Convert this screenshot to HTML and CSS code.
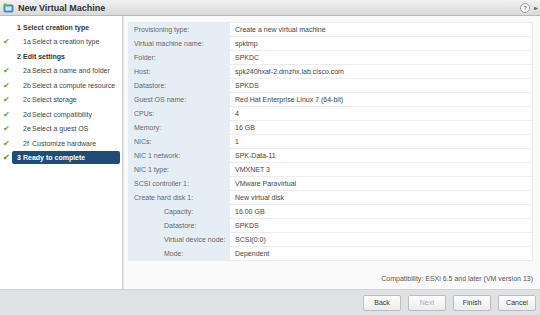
FILE: index.html
```html
<!DOCTYPE html>
<html>
<head>
    <link rel="stylesheet" href="styles.css">
</head>
<body>
    <div class="dialog">
        <div class="titlebar">
            <svg class="vm-icon" width="11" height="10" viewBox="0 0 11 10">
                <rect x="1" y="2" width="9" height="7" rx="1" fill="#5b9bd5" stroke="#2f6ea8" stroke-width="0.8"/>
                <rect x="2.5" y="3.5" width="6" height="4" fill="#cfe4f7"/>
                <path d="M0.5 0.5h3v3h-3z" fill="#6cc04a"/>
            </svg>
            <span class="title">New Virtual Machine</span>
            <span class="tools">
                <span class="help">?</span>
                <span class="more">&#9656;&#9656;</span>
            </span>
        </div>
        <div class="main">
            <div class="nav">
                <div class="step head"><span class="check"></span><span class="num">1</span>Select creation type</div>
                <div class="step sub done"><span class="check">&#10004;</span><span class="num">1a</span>Select a creation type</div>
                <div class="step head"><span class="check"></span><span class="num">2</span>Edit settings</div>
                <div class="step sub done"><span class="check">&#10004;</span><span class="num">2a</span>Select a name and folder</div>
                <div class="step sub done"><span class="check">&#10004;</span><span class="num">2b</span>Select a compute resource</div>
                <div class="step sub done"><span class="check">&#10004;</span><span class="num">2c</span>Select storage</div>
                <div class="step sub done"><span class="check">&#10004;</span><span class="num">2d</span>Select compatibility</div>
                <div class="step sub done"><span class="check">&#10004;</span><span class="num">2e</span>Select a guest OS</div>
                <div class="step sub done"><span class="check">&#10004;</span><span class="num">2f</span>Customize hardware</div>
                <div class="step head done active"><span class="check">&#10004;</span><span class="pill"><span class="num">3</span>Ready to complete</span></div>
            </div>
            <div class="content">
                <table class="summary">
                    <tr><td class="key">Provisioning type:</td><td>Create a new virtual machine</td></tr>
                    <tr><td class="key">Virtual machine name:</td><td>spktmp</td></tr>
                    <tr><td class="key">Folder:</td><td>SPKDC</td></tr>
                    <tr><td class="key">Host:</td><td>spk240hxaf-2.dmzhx.lab.cisco.com</td></tr>
                    <tr><td class="key">Datastore:</td><td>SPKDS</td></tr>
                    <tr><td class="key">Guest OS name:</td><td>Red Hat Enterprise Linux 7 (64-bit)</td></tr>
                    <tr><td class="key">CPUs:</td><td>4</td></tr>
                    <tr><td class="key">Memory:</td><td>16 GB</td></tr>
                    <tr><td class="key">NICs:</td><td>1</td></tr>
                    <tr><td class="key">NIC 1 network:</td><td>SPK-Data-11</td></tr>
                    <tr><td class="key">NIC 1 type:</td><td>VMXNET 3</td></tr>
                    <tr><td class="key">SCSI controller 1:</td><td>VMware Paravirtual</td></tr>
                    <tr><td class="key">Create hard disk 1:</td><td>New virtual disk</td></tr>
                    <tr><td class="key indent">Capacity:</td><td>16.00 GB</td></tr>
                    <tr><td class="key indent">Datastore:</td><td>SPKDS</td></tr>
                    <tr><td class="key indent">Virtual device node:</td><td>SCSI(0:0)</td></tr>
                    <tr><td class="key indent">Mode:</td><td>Dependent</td></tr>
                </table>
                <div class="compat">Compatibility: ESXi 6.5 and later (VM version 13)</div>
            </div>
        </div>
        <div class="footer">
            <button>Back</button>
            <button disabled>Next</button>
            <button>Finish</button>
            <button>Cancel</button>
        </div>
    </div>
</body>
</html>
```

FILE: styles.css
```css
html, body {
  margin: 0;
  padding: 0;
}

body {
  font-family: "Liberation Sans", Arial, sans-serif;
  font-size: 7px;
  color: #333;
  background: #fff;
}

.dialog {
  width: 540px;
  height: 315px;
  display: flex;
  flex-direction: column;
  overflow: hidden;
}

.titlebar {
  height: 15px;
  flex: none;
  display: flex;
  align-items: center;
  padding: 0 4px 0 3px;
  background: linear-gradient(#f2f2f2, #d9d9d9);
  border-bottom: 1px solid #b9b9b9;
}

.vm-icon {
  margin-right: 4px;
}

.title {
  font-size: 9px;
  font-weight: bold;
  color: #333;
}

.tools {
  margin-left: auto;
  display: flex;
  align-items: center;
  gap: 4px;
}

.help {
  width: 8px;
  height: 8px;
  border-radius: 50%;
  border: 1px solid #9a9a9a;
  background: #fff;
  color: #777;
  font-size: 6px;
  font-weight: bold;
  line-height: 8px;
  text-align: center;
}

.more {
  font-size: 6px;
  color: #666;
  letter-spacing: -2px;
}

.main {
  flex: 1;
  display: flex;
  min-height: 0;
}

.nav {
  width: 122px;
  flex: none;
  padding-top: 4px;
  border-right: 1px solid #d2d2d2;
  background: #fff;
}

.step {
  height: 14.5px;
  display: flex;
  align-items: center;
  white-space: nowrap;
  color: #444;
}

.check {
  width: 14px;
  flex: none;
  padding-left: 3px;
  color: #5aa830;
  font-size: 8px;
}

.step.head {
  font-weight: bold;
  color: #333;
}

.step.head .num {
  width: 6px;
}

.step.sub .num {
  margin-left: 6px;
  width: 9px;
}

.step .num {
  display: inline-block;
  flex: none;
}

.pill {
  flex: 1;
  display: flex;
  align-items: center;
  height: 13px;
  margin-right: 2px;
  margin-left: -5px;
  padding-left: 5px;
  background: #1f4d78;
  border-radius: 2px;
  color: #fff;
}

.content {
  flex: 1;
  display: flex;
  flex-direction: column;
  padding: 6px 7px 0 4px;
  background: #fafafa;
  border-left: 1px solid #e4e4e4;
}

.summary {
  width: 100%;
  border-collapse: collapse;
  background: #fff;
}

.summary td {
  height: 13px;
  padding: 0 0 0 5px;
  border: 1px solid #ececec;
  color: #444;
  white-space: nowrap;
}

.summary td.key {
  width: 95px;
  background: #e6eef5;
  border-color: #e6eef5;
  color: #666;
}

.summary td.indent {
  padding-left: 35px;
  width: 65px;
}

.compat {
  margin-top: auto;
  margin-bottom: 7px;
  text-align: right;
  color: #555;
}

.footer {
  height: 25px;
  flex: none;
  display: flex;
  justify-content: flex-end;
  align-items: center;
  gap: 7px;
  padding-right: 4px;
  background: #dee2e5;
  border-top: 1px solid #d0d4d7;
}

.footer button {
  height: 16px;
  width: 38px;
  padding: 0;
  font-family: "Liberation Sans", Arial, sans-serif;
  font-size: 7px;
  color: #333;
  background: linear-gradient(#ffffff, #ececec);
  border: 1px solid #bdbdbd;
  border-radius: 2px;
}

.footer button:disabled {
  color: #aaa;
}
```
